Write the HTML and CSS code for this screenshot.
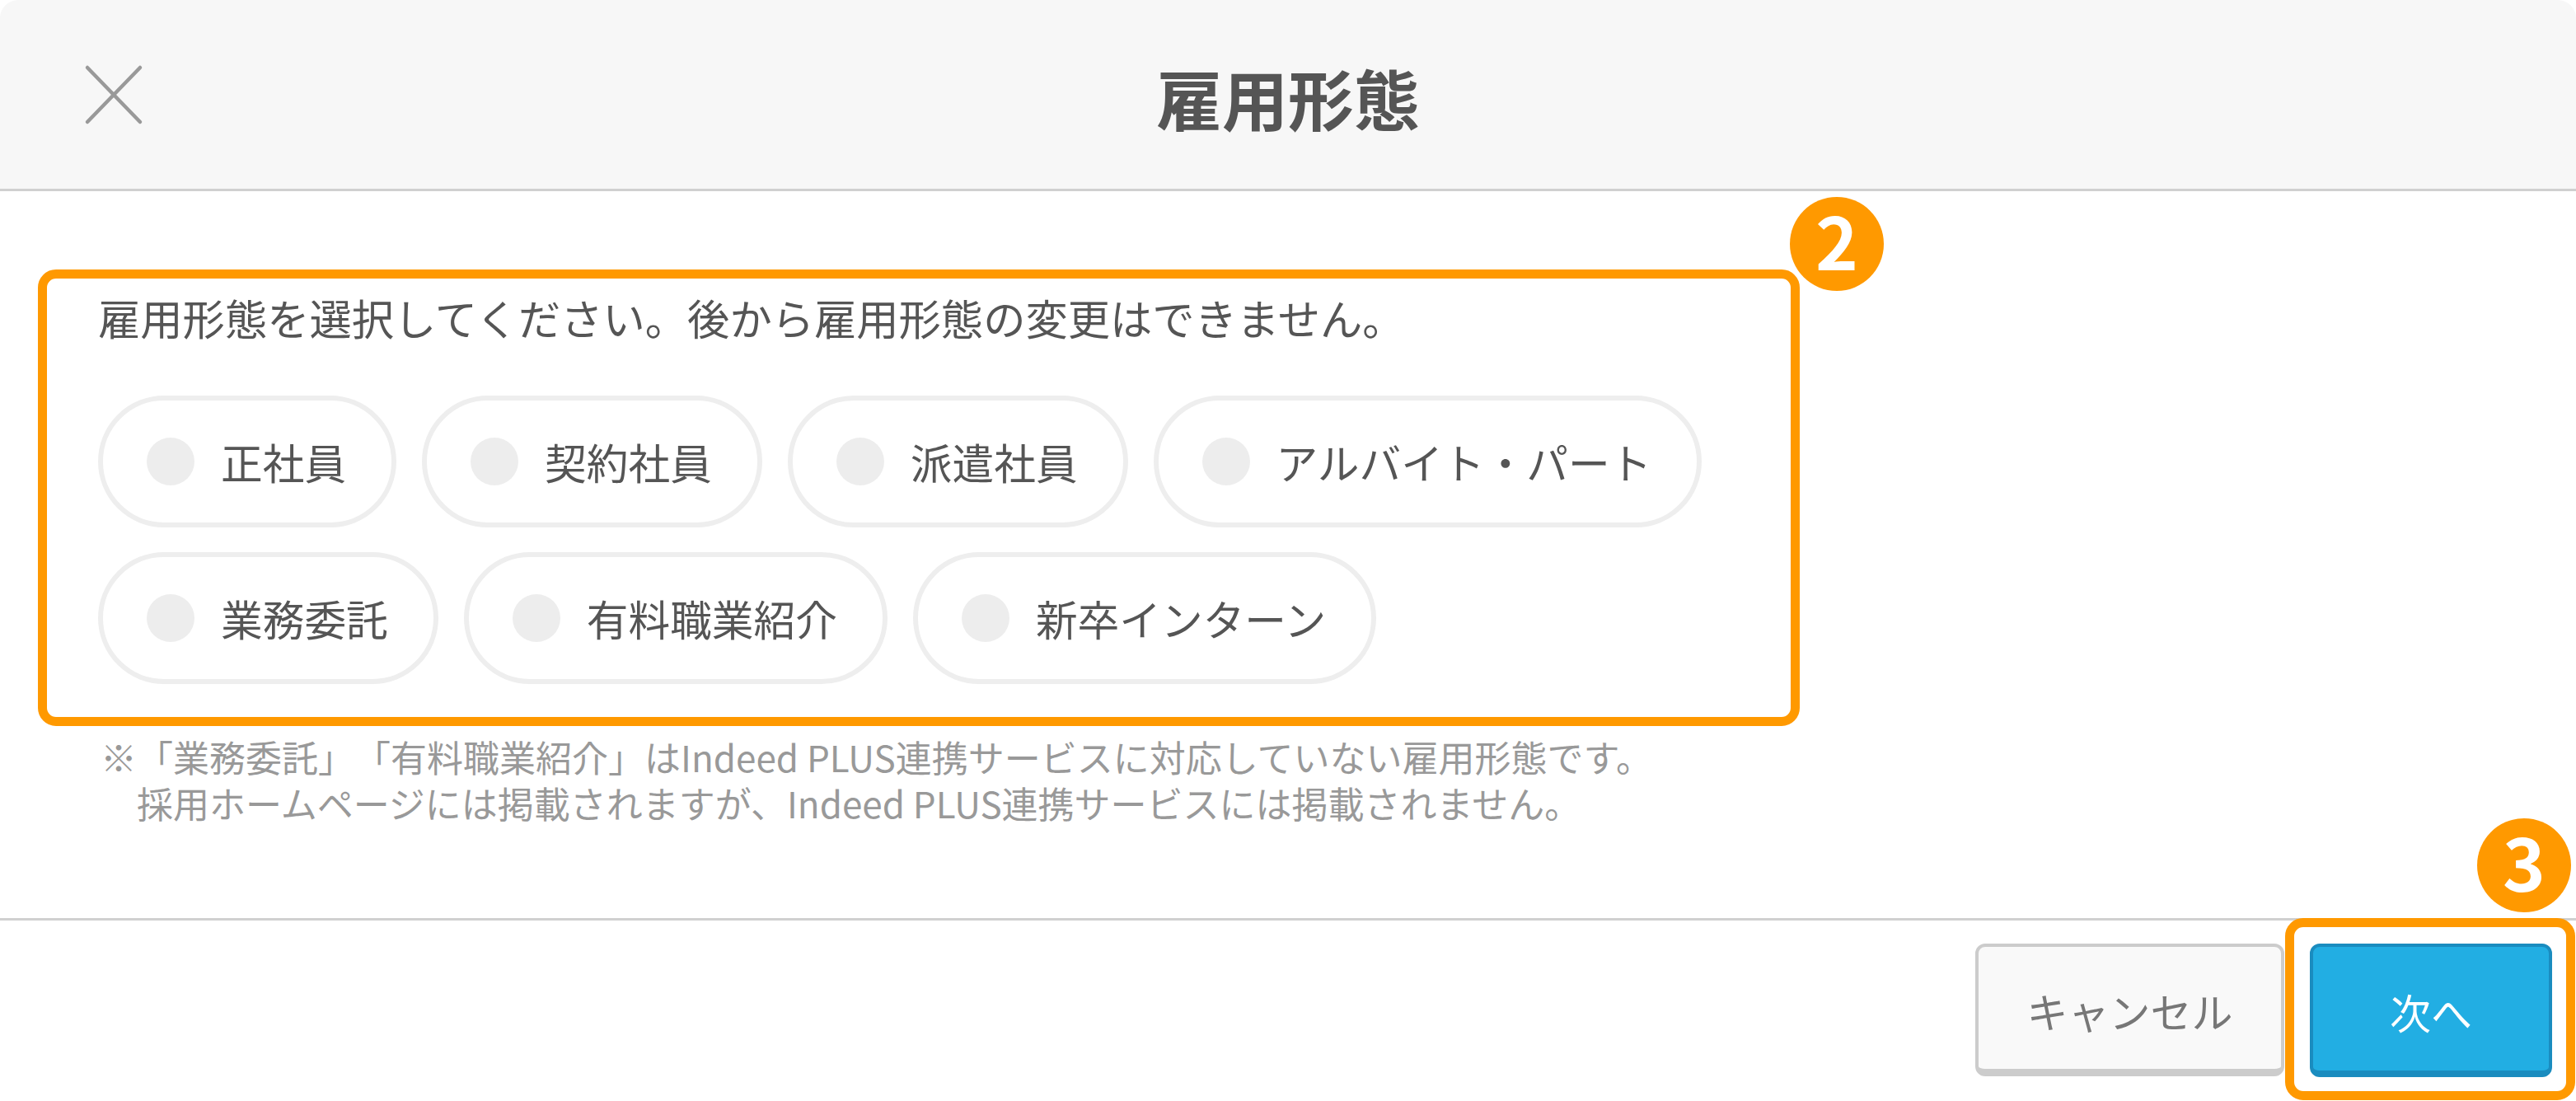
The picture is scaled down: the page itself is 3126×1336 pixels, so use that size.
FILE: index.html
```html
<!DOCTYPE html>
<html lang="ja">
<head>
<meta charset="utf-8">
<title>雇用形態</title>
<link rel="stylesheet" href="styles.css">
</head>
<body>
<div class="modal">
  <header class="modal-header">
    <button class="close" type="button" aria-label="閉じる">
      <svg width="72" height="74" viewBox="0 0 72 74" aria-hidden="true">
        <line x1="4" y1="4" x2="68" y2="70" />
        <line x1="68" y1="4" x2="4" y2="70" />
      </svg>
    </button>
    <h1 class="title">雇用形態</h1>
    <span class="spacer"></span>
  </header>

  <main class="modal-body">
    <section class="field">
      <span class="badge badge-2">2</span>
      <p class="lead">雇用形態を選択してください。後から雇用形態の変更はできません。</p>
      <div class="chips">
        <label class="chip"><span class="radio"></span><span class="chip-label">正社員</span></label>
        <label class="chip"><span class="radio"></span><span class="chip-label">契約社員</span></label>
        <label class="chip"><span class="radio"></span><span class="chip-label">派遣社員</span></label>
        <label class="chip"><span class="radio"></span><span class="chip-label">アルバイト・パート</span></label>
        <label class="chip"><span class="radio"></span><span class="chip-label">業務委託</span></label>
        <label class="chip"><span class="radio"></span><span class="chip-label">有料職業紹介</span></label>
        <label class="chip"><span class="radio"></span><span class="chip-label">新卒インターン</span></label>
      </div>
    </section>
    <p class="note">※「業務委託」「有料職業紹介」はIndeed PLUS連携サービスに対応していない雇用形態です。<br>採用ホームページには掲載されますが、Indeed PLUS連携サービスには掲載されません。</p>
  </main>

  <footer class="modal-footer">
    <button class="btn btn-cancel" type="button">キャンセル</button>
    <div class="next-wrap">
      <span class="badge badge-3">3</span>
      <span class="highlight"></span>
      <button class="btn btn-next" type="button">次へ</button>
    </div>
  </footer>
</div>
</body>
</html>
```

FILE: styles.css
```css
* {
  box-sizing: border-box;
}

html, body {
  margin: 0;
  padding: 0;
  background: #ffffff;
}

body {
  font-family: "Noto Sans CJK JP", "Noto Sans", sans-serif;
  color: #555555;
  width: 3126px;
  height: 1336px;
  overflow: hidden;
  text-spacing-trim: space-all;
}

.modal {
  display: flex;
  flex-direction: column;
  width: 3126px;
  height: 1336px;
  background: #ffffff;
  border-radius: 22px 22px 0 0;
  overflow: hidden;
}

/* header */
.modal-header {
  flex: 0 0 auto;
  height: 232px;
  background: #f7f7f7;
  border-bottom: 3px solid #d0d0d0;
  display: grid;
  grid-template-columns: 1fr auto 1fr;
  align-items: center;
}

.close {
  justify-self: start;
  margin-left: 102px;
  padding: 0;
  border: 0;
  background: transparent;
  display: flex;
  line-height: 0;
}

.close svg line {
  stroke: #999999;
  stroke-width: 4.5;
  stroke-linecap: round;
}

.title {
  margin: 0;
  padding-top: 4px;
  font-size: 80px;
  line-height: 80px;
  font-weight: 700;
  color: #555555;
}

/* body */
.modal-body {
  flex: 1 1 auto;
  padding: 95px 0 0 46px;
}

.field {
  position: relative;
  width: 2138px;
  border: 11px solid #ff9900;
  border-radius: 22px;
  padding: 9px 62px 40px 62px;
}

.lead {
  margin: 0 0 58px 0;
  font-size: 51.3px;
  line-height: 75px;
  color: #555555;
  white-space: nowrap;
}

.chips {
  display: flex;
  flex-wrap: wrap;
  gap: 30px 31px;
}

.chip {
  display: inline-flex;
  align-items: center;
  gap: 32px;
  height: 160px;
  padding: 0 55px 0 53px;
  border: 6px solid #eeeeee;
  border-radius: 80px;
  background: #ffffff;
  font-size: 50.7px;
  color: #555555;
  white-space: nowrap;
}

.radio {
  flex: 0 0 auto;
  width: 58px;
  height: 58px;
  border-radius: 50%;
  background: #ededed;
}

.chip-label {
  line-height: 1;
}

.note {
  margin: 9px 0 0 76px;
  padding-left: 44px;
  text-indent: -44px;
  font-size: 44px;
  line-height: 56px;
  color: #999999;
  white-space: nowrap;
}

/* badges */
.badge {
  position: absolute;
  width: 114px;
  height: 114px;
  border-radius: 50%;
  background: #ff9900;
  color: #ffffff;
  font-size: 88px;
  font-weight: 700;
  line-height: 102px;
  text-align: center;
  z-index: 3;
}

.badge-2 {
  top: -99px;
  right: -113px;
}

.badge-3 {
  top: -152px;
  right: -23px;
}

/* footer */
.modal-footer {
  flex: 0 0 auto;
  height: 222px;
  border-top: 3px solid #d0d0d0;
  display: flex;
  justify-content: flex-end;
  align-items: flex-start;
  gap: 31px;
  padding: 28px 29px 0 0;
}

.btn {
  margin: 0;
  font-family: "Noto Sans CJK JP", "Noto Sans", sans-serif;
  font-size: 50px;
  line-height: 1;
  border-radius: 12px;
  display: flex;
  align-items: center;
  justify-content: center;
  padding: 6px 0 0 0;
}

.btn-cancel {
  width: 375px;
  height: 161px;
  background: #f9f9f9;
  color: #777777;
  border: 4px solid #cccccc;
  border-bottom-width: 9px;
}

.next-wrap {
  position: relative;
  display: flex;
}

.btn-next {
  position: relative;
  z-index: 1;
  width: 294px;
  height: 162px;
  background: #22aee3;
  color: #ffffff;
  border: 4px solid #1a8cbf;
  border-bottom-width: 8px;
}

.highlight {
  position: absolute;
  top: -31px;
  left: -30px;
  right: -28px;
  bottom: -28px;
  border: 11px solid #ff9900;
  border-radius: 22px;
  z-index: 2;
  pointer-events: none;
}
```
